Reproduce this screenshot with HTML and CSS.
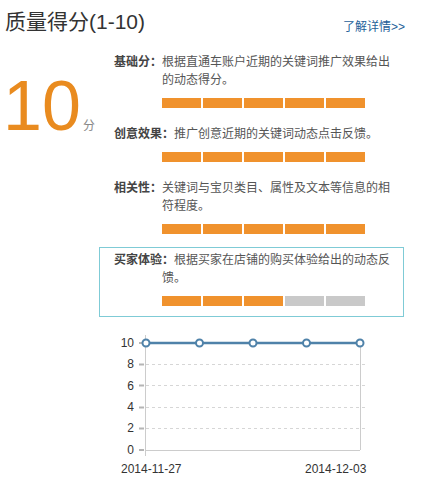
FILE: index.html
```html
<!DOCTYPE html>
<html lang="zh-CN">
<head>
<meta charset="utf-8">
<title>质量得分</title>
<link rel="stylesheet" href="styles.css">
</head>
<body>
<div class="page">
  <div class="header">
    <div class="title">质量得分(1-10)</div>
    <a class="more" href="#">了解详情&gt;&gt;</a>
  </div>
  <div class="main">
    <div class="score"><span class="num">10</span><span class="unit">分</span></div>
    <div class="items">
      <div class="item">
        <p class="desc"><b class="label">基础分：</b>根据直通车账户近期的关键词推广效果给出的动态得分。</p>
        <div class="bars"><i class="bar on"></i><i class="bar on"></i><i class="bar on"></i><i class="bar on"></i><i class="bar on"></i></div>
      </div>
      <div class="item">
        <p class="desc"><b class="label">创意效果：</b>推广创意近期的关键词动态点击反馈。</p>
        <div class="bars"><i class="bar on"></i><i class="bar on"></i><i class="bar on"></i><i class="bar on"></i><i class="bar on"></i></div>
      </div>
      <div class="item">
        <p class="desc"><b class="label">相关性：</b>关键词与宝贝类目、属性及文本等信息的相符程度。</p>
        <div class="bars"><i class="bar on"></i><i class="bar on"></i><i class="bar on"></i><i class="bar on"></i><i class="bar on"></i></div>
      </div>
      <div class="item active">
        <p class="desc"><b class="label">买家体验：</b><span>根据买家在店铺的购买体验给出的动态反</span><span>馈。</span></p>
        <div class="bars"><i class="bar on"></i><i class="bar on"></i><i class="bar on"></i><i class="bar"></i><i class="bar"></i></div>
      </div>
    </div>
  </div>
  <svg class="chart" width="427" height="168" viewBox="0 319 427 168" xmlns="http://www.w3.org/2000/svg">
    <g class="grid">
      <line x1="146" y1="364.5" x2="367" y2="364.5"/>
      <line x1="146" y1="385.5" x2="367" y2="385.5"/>
      <line x1="146" y1="407.5" x2="367" y2="407.5"/>
      <line x1="146" y1="428.5" x2="367" y2="428.5"/>
    </g>
    <g class="axis">
      <line x1="145.5" y1="335" x2="145.5" y2="456"/>
      <line x1="145" y1="450.5" x2="360" y2="450.5"/>
      <line x1="360.5" y1="343" x2="360.5" y2="450"/>
    </g>
    <g class="ticks">
      <line x1="139" y1="343" x2="144" y2="343"/>
      <line x1="139" y1="364.5" x2="144" y2="364.5"/>
      <line x1="139" y1="385.5" x2="144" y2="385.5"/>
      <line x1="139" y1="407.5" x2="144" y2="407.5"/>
      <line x1="139" y1="428.5" x2="144" y2="428.5"/>
      <line x1="139" y1="450" x2="144" y2="450"/>
    </g>
    <g class="ylab">
      <text x="134" y="347">10</text>
      <text x="134" y="368">8</text>
      <text x="134" y="390">6</text>
      <text x="134" y="411">4</text>
      <text x="134" y="432">2</text>
      <text x="134" y="454">0</text>
    </g>
    <polyline class="series" points="146,343 199.5,343 253,343 306.5,343 360,343"/>
    <g class="pts">
      <circle cx="146" cy="343" r="3.5"/>
      <circle cx="199.5" cy="343" r="3.5"/>
      <circle cx="253" cy="343" r="3.5"/>
      <circle cx="306.5" cy="343" r="3.5"/>
      <circle cx="360" cy="343" r="3.5"/>
    </g>
    <g class="xlab">
      <text x="121" y="473">2014-11-27</text>
      <text x="305" y="473">2014-12-03</text>
    </g>
  </svg>
</div>
</body>
</html>
```

FILE: styles.css
```css
html, body {
  margin: 0;
  padding: 0;
  background: #fff;
}
body {
  font-family: "Liberation Sans", "Noto Sans CJK SC", sans-serif;
  color: #555;
  width: 427px;
  height: 487px;
  overflow: hidden;
}
.page {
  width: 427px;
}
.header {
  display: flex;
  justify-content: space-between;
  align-items: flex-start;
  height: 49px;
  padding: 0 22px 0 5px;
}
.title {
  font-size: 21px;
  line-height: 44px;
  color: #333;
}
.more {
  font-size: 12px;
  line-height: 18px;
  padding-top: 18px;
  color: #1f5f99;
  text-decoration: none;
}
.main {
  display: flex;
  align-items: flex-start;
}
.score {
  width: 96px;
  padding-left: 3px;
  margin-top: 22px;
  white-space: nowrap;
}
.num {
  font-size: 70px;
  line-height: 70px;
  color: #e98b1f;
}
.unit {
  font-size: 12px;
  color: #888;
  margin-left: 2px;
}
.items {
  width: 305px;
}
.item {
  border: 1px solid transparent;
  padding: 3px 9px 10px 62px;
  margin-bottom: 2px;
}
.item.active {
  border-color: #7fcbd6;
}
.desc {
  margin: 0;
  font-size: 12px;
  line-height: 18px;
  color: #555;
  text-spacing-trim: space-all;
}
.label {
  display: inline-block;
  margin-left: -48px;
  font-weight: bold;
  color: #444;
}
.bars {
  display: flex;
  gap: 2px;
  margin-top: 9px;
}
.bar {
  display: block;
  width: 39px;
  height: 10px;
  background: #c9c9c9;
}
.bar.on {
  background: #f0922d;
}
.chart {
  display: block;
}
.grid line {
  stroke: #d6d6d6;
  stroke-width: 1;
  stroke-dasharray: 3 3;
}
.axis line {
  stroke: #cccccc;
  stroke-width: 1;
}
.ticks line {
  stroke: #b5b5b5;
  stroke-width: 2;
}
.ylab text {
  font-family: "Liberation Sans", sans-serif;
  font-size: 12px;
  fill: #333;
  text-anchor: end;
}
.xlab text {
  font-family: "Liberation Sans", sans-serif;
  font-size: 12px;
  fill: #333;
}
.series {
  fill: none;
  stroke: #4f82a9;
  stroke-width: 2.5;
}
.pts circle {
  fill: #fff;
  stroke: #4f82a9;
  stroke-width: 2;
}
```
